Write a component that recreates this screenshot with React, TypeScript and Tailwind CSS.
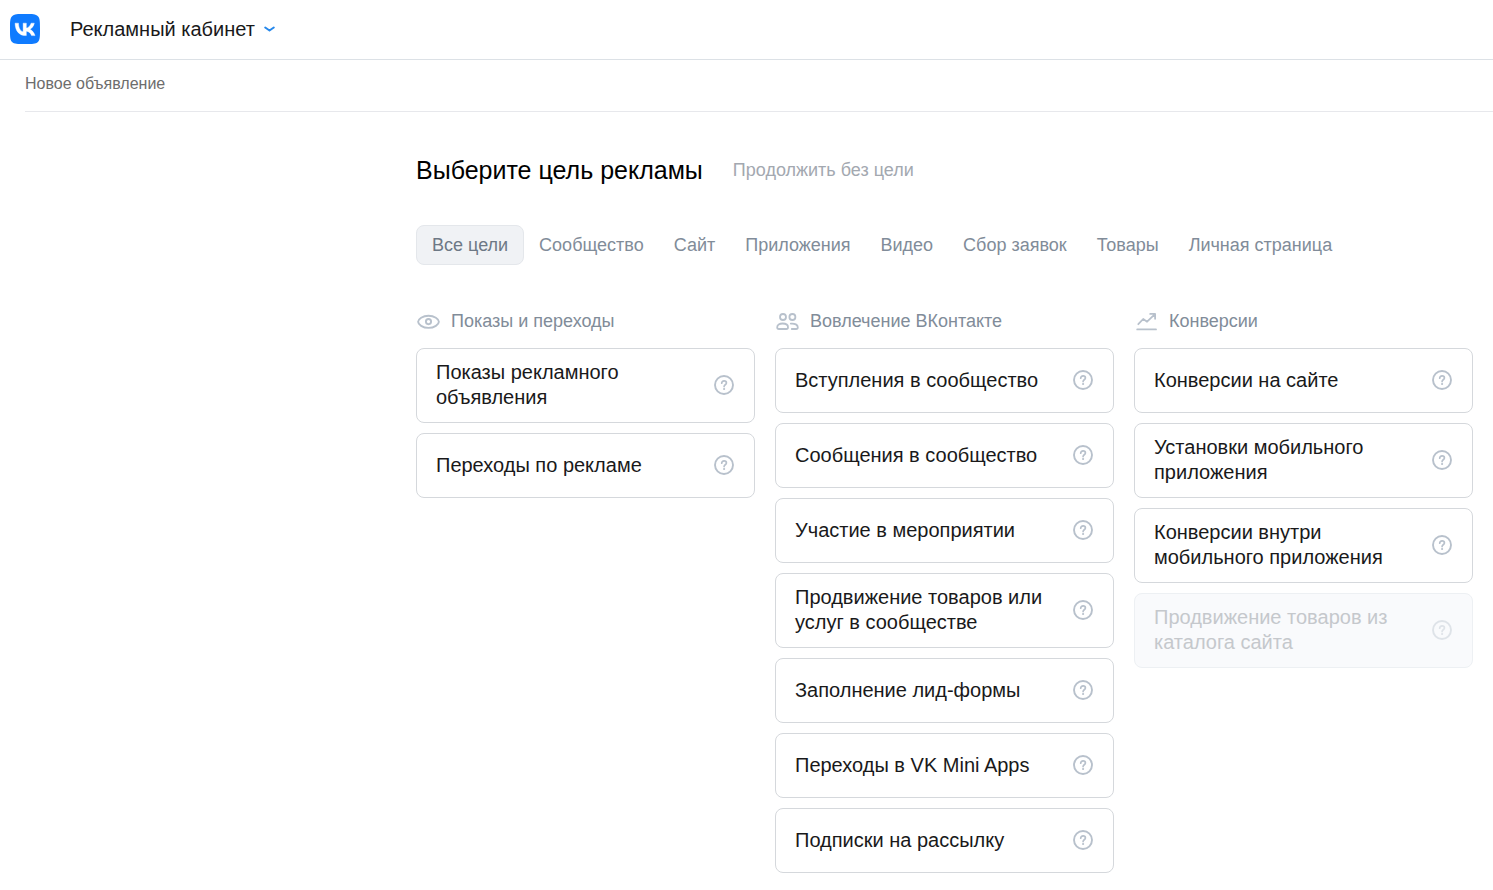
import { useState } from "react";
import type { ReactNode } from "react";

type Goal = { title: string; disabled?: boolean };
type Group = { title: string; icon: ReactNode; goals: Goal[] };

function VkLogo() {
  return (
    <svg width="30" height="30" viewBox="0 0 24 24" aria-hidden="true">
      <path
        fill="#0f7bff"
        d="M0 11.5C0 6.1 0 3.4 1.7 1.7 3.4 0 6.1 0 11.5 0h1c5.4 0 8.1 0 9.8 1.7C24 3.4 24 6.1 24 11.5v1c0 5.4 0 8.1-1.7 9.8-1.7 1.7-4.4 1.7-9.8 1.7h-1c-5.4 0-8.1 0-9.8-1.7C0 20.6 0 17.9 0 12.5z"
      />
      <path
        fill="#fff"
        stroke="#fff"
        strokeWidth="0.3"
        d="M12.77 17.29c-5.47 0-8.59-3.75-8.72-9.99h2.74c.09 4.58 2.11 6.52 3.71 6.92V7.3h2.58v3.95c1.58-.17 3.24-1.97 3.8-3.95h2.58c-.43 2.44-2.23 4.24-3.51 4.98 1.28.6 3.33 2.17 4.11 5.01h-2.84c-.61-1.9-2.13-3.37-4.14-3.57v3.57z"
      />
    </svg>
  );
}

function EyeIcon() {
  return (
    <svg width="24" height="24" viewBox="0 0 24 24" fill="none" stroke="#b8c1cc" strokeWidth="1.9" aria-hidden="true">
      <path d="M12.500 6.700c5.800 0 10.400 3.500 10.400 6.100s-4.600 6.100-10.400 6.100S2.100 15.400 2.100 12.800 6.700 6.700 12.500 6.700z" />
      <circle cx="12.500" cy="12.600" r="2.600" />
    </svg>
  );
}

function UsersIcon() {
  return (
    <svg width="24" height="24" viewBox="0 0 24 24" fill="none" stroke="#b8c1cc" strokeWidth="1.8" strokeLinecap="round" strokeLinejoin="round" aria-hidden="true">
      <circle cx="8" cy="8" r="3" />
      <circle cx="17.400" cy="8" r="3" />
      <path d="M7.600 14.500c-3.200 0-5.400 1.500-5.400 3.700 0 1.100.6 1.800 1.700 1.800h7.400c1.100 0 1.700-.7 1.700-1.800 0-2.200-2.200-3.700-5.400-3.700z" />
      <path d="M15.800 14.600c4.200-.4 7 1.200 7 3.600 0 1.100-.6 1.800-1.700 1.800h-4.300" />
    </svg>
  );
}

function ChartIcon() {
  return (
    <svg width="24" height="24" viewBox="0 0 24 24" fill="none" stroke="#b8c1cc" strokeWidth="1.8" strokeLinecap="round" strokeLinejoin="round" aria-hidden="true">
      <path d="M4.300 15.200l4.900-5.200 3.900 2.700 7.600-7.400M16.200 4.900h4.900v4.900M3.200 20.400h18.800" />
    </svg>
  );
}

function HelpIcon() {
  return (
    <svg width="20" height="20" viewBox="0 0 20 20" fill="none" stroke="#b8c1cc" strokeLinecap="round" aria-hidden="true">
      <circle cx="10" cy="10" r="9" strokeWidth="1.9" />
      <path d="M7.700 8.200c0-1.400.9-2.300 2.400-2.300 1.400 0 2.300.8 2.300 2 0 1.900-2.300 1.800-2.300 3.700" strokeWidth="1.7" />
      <circle cx="10.100" cy="14" r="1.100" fill="#b8c1cc" stroke="none" />
    </svg>
  );
}

const tabs = ["Все цели", "Сообщество", "Сайт", "Приложения", "Видео", "Сбор заявок", "Товары", "Личная страница"];

const groups: Group[] = [
  {
    title: "Показы и переходы",
    icon: <EyeIcon />,
    goals: [{ title: "Показы рекламного объявления" }, { title: "Переходы по рекламе" }],
  },
  {
    title: "Вовлечение ВКонтакте",
    icon: <UsersIcon />,
    goals: [
      { title: "Вступления в сообщество" },
      { title: "Сообщения в сообщество" },
      { title: "Участие в мероприятии" },
      { title: "Продвижение товаров или услуг в сообществе" },
      { title: "Заполнение лид-формы" },
      { title: "Переходы в VK Mini Apps" },
      { title: "Подписки на рассылку" },
    ],
  },
  {
    title: "Конверсии",
    icon: <ChartIcon />,
    goals: [
      { title: "Конверсии на сайте" },
      { title: "Установки мобильного приложения" },
      { title: "Конверсии внутри мобильного приложения" },
      { title: "Продвижение товаров из каталога сайта", disabled: true },
    ],
  },
];

function GoalCard({ goal }: { goal: Goal }) {
  return (
    <li
      className={
        goal.disabled
          ? "flex min-h-[65px] items-stretch rounded-lg border border-[#edf0f3] bg-[#f9fafc] text-[#c5c8cc]"
          : "flex min-h-[65px] items-stretch rounded-lg border border-[#d5d8dc] bg-white text-[#19191a]"
      }
    >
      <button
        type="button"
        disabled={goal.disabled}
        className="flex-1 pt-[11px] pr-4 pb-3 pl-[19px] text-left text-[20px] leading-[25px]"
      >
        {goal.title}
      </button>
      <button
        type="button"
        disabled={goal.disabled}
        aria-label={`Справка: ${goal.title}`}
        className="shrink-0 pr-5 pb-px pl-2 disabled:opacity-40"
      >
        <HelpIcon />
      </button>
    </li>
  );
}

export default function App() {
  const [active, setActive] = useState(tabs[0]);
  return (
    <div className="min-h-screen bg-white font-['Liberation_Sans',Arial,sans-serif] text-black">
      <header className="flex h-[60px] items-center gap-[30px] border-b border-[#dce1e6] px-[10px] pb-0.5">
        <a href="#home" aria-label="VK">
          <VkLogo />
        </a>
        <button type="button" className="flex items-center gap-2 text-[20px] leading-6 text-[#19191a]">
          Рекламный кабинет
          <svg width="13" height="8" viewBox="0 0 13 8" fill="none" stroke="#2688eb" strokeWidth="2" strokeLinecap="round" strokeLinejoin="round" aria-hidden="true">
            <path d="M2.200 2.500l4.300 3 4.300-3" />
          </svg>
        </button>
      </header>

      <div className="ml-[25px] flex h-[52px] items-center border-b border-[#e7e8ec] pb-1 text-[16px] text-[#6d6d6d]">
        Новое объявление
      </div>

      <main className="pt-[43px] pr-5 pb-4 pl-[416px]">
        <div className="flex items-center gap-[30px]">
          <h1 className="text-[25px] leading-[30px]">Выберите цель рекламы</h1>
          <a href="#skip" className="text-[18px] leading-6 text-[#a3a8b0]">
            Продолжить без цели
          </a>
        </div>

        <nav className="mt-10 flex" aria-label="Цели">
          {tabs.map((tab) => (
            <button
              key={tab}
              type="button"
              aria-pressed={tab === active}
              onClick={() => setActive(tab)}
              className={
                tab === active
                  ? "h-10 shrink-0 rounded-lg border border-[#e4e7eb] bg-[#f0f2f5] px-[15px] text-[18px] text-[#6d7885]"
                  : "h-10 shrink-0 rounded-lg border-y border-transparent px-[15px] text-[18px] text-[#818c99]"
              }
            >
              {tab}
            </button>
          ))}
        </nav>

        <div className="mt-11 grid grid-cols-3 items-start gap-5">
          {groups.map((group) => (
            <section key={group.title}>
              <h2 className="flex items-center gap-[11px] text-[18px] leading-6 text-[#818c99]">
                {group.icon}
                {group.title}
              </h2>
              <ul className="mt-[15px] flex flex-col gap-[10px]">
                {group.goals.map((goal) => (
                  <GoalCard key={goal.title} goal={goal} />
                ))}
              </ul>
            </section>
          ))}
        </div>
      </main>
    </div>
  );
}
